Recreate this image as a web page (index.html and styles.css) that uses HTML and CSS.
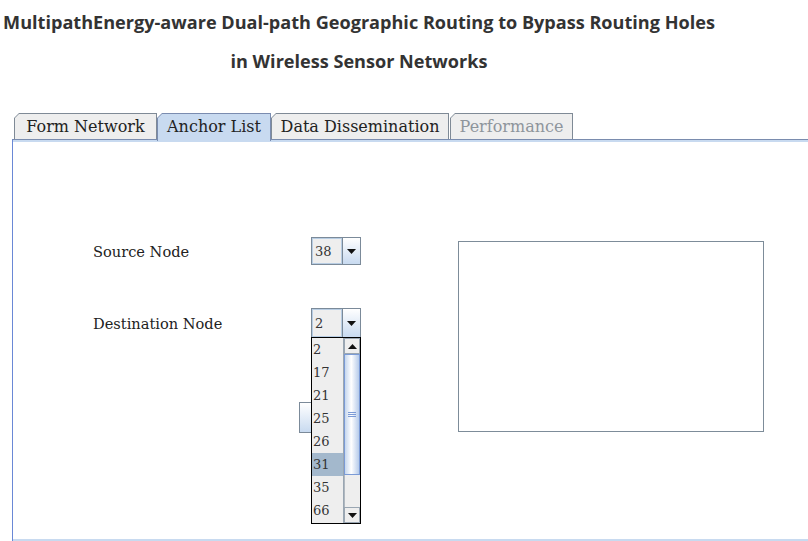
FILE: index.html
```html
<!DOCTYPE html>
<html lang="en">
<head>
<meta charset="utf-8">
<title>Anchor List</title>
<link rel="stylesheet" href="styles.css">
</head>
<body>
<div class="app">
  <header class="title">
    <h1>MultipathEnergy-aware Dual-path Geographic Routing to Bypass Routing Holes</h1>
    <h2>in Wireless Sensor Networks</h2>
  </header>
  <nav class="tabs">
    <div class="tab tab-form"><span>Form Network</span></div>
    <div class="tab tab-anchor selected"><span>Anchor List</span></div>
    <div class="tab tab-data"><span>Data Dissemination</span></div>
    <div class="tab tab-perf disabled"><span>Performance</span></div>
  </nav>
  <section class="panel">
    <div class="form">
      <div class="label">Source Node</div>
      <div class="combo">
        <div class="combo-value">38</div>
        <div class="combo-arrow"><svg width="9" height="5" viewBox="0 0 9 5"><path d="M0 0H9L4.5 5Z" fill="#111"/></svg></div>
      </div>
      <div class="label">Destination Node</div>
      <div class="combo open">
        <div class="combo-value">2</div>
        <div class="combo-arrow"><svg width="9" height="5" viewBox="0 0 9 5"><path d="M0 0H9L4.5 5Z" fill="#111"/></svg></div>
        <div class="popup">
          <ul class="list">
            <li>2</li>
            <li>17</li>
            <li>21</li>
            <li>25</li>
            <li>26</li>
            <li class="sel">31</li>
            <li>35</li>
            <li>66</li>
          </ul>
          <div class="scrollbar">
            <div class="sb-btn"><svg width="9" height="5" viewBox="0 0 9 5"><path d="M0 5H9L4.5 0Z" fill="#111"/></svg></div>
            <div class="sb-thumb"><span class="grip"></span></div>
            <div class="sb-track"></div>
            <div class="sb-btn"><svg width="9" height="5" viewBox="0 0 9 5"><path d="M0 0H9L4.5 5Z" fill="#111"/></svg></div>
          </div>
        </div>
      </div>
      <div class="hidden-btn"></div>
    </div>
    <div class="output"></div>
  </section>
</div>
</body>
</html>
```
FILE: styles.css
```css
html, body {
  margin: 0;
  padding: 0;
  background: #ffffff;
  overflow: hidden;
}
.app {
  width: 808px;
  height: 541px;
  display: flex;
  flex-direction: column;
}
.title {
  width: 718px;
  text-align: center;
  color: #333333;
  font-family: "Open Sans", "DejaVu Sans", sans-serif;
  font-weight: 700;
  font-size: 18.1px;
}
.title h1, .title h2 {
  margin: 0;
  font-size: inherit;
  font-weight: 700;
  white-space: nowrap;
  line-height: 39px;
}
.title h1 {
  margin-top: 3px;
}
.tabs {
  display: flex;
  margin-top: 32px;
  padding-left: 14px;
  height: 26px;
  font-family: "DejaVu Serif", serif;
  font-size: 16px;
}
.tab {
  box-sizing: border-box;
  background: #7f8a96;
  padding: 1px 1px 0 1px;
  clip-path: polygon(0 5px, 5px 0, 100% 0, 100% 100%, 0 100%);
  display: flex;
}
.tab span {
  flex: 1;
  background: #eeeeee;
  color: #222222;
  clip-path: polygon(0 4px, 4px 0, 100% 0, 100% 100%, 0 100%);
  display: flex;
  align-items: center;
  justify-content: center;
  line-height: 1;
  padding-top: 1px;
}
.tab-form { width: 143px; }
.tab-anchor { width: 114px; }
.tab-data { width: 178px; }
.tab-perf { width: 123px; margin-left: 1px; }
.tab.selected {
  background: #7a8cb0;
  height: 28px;
  position: relative;
  z-index: 2;
}
.tab.selected span {
  background: #c8daf0;
  padding-bottom: 2px;
}
.tab.disabled span {
  color: #8e959c;
}
.panel {
  flex: 1;
  margin-left: 12px;
  border-top: 1px solid #7a8cae;
  border-left: 1px solid #6a88d6;
  box-shadow: inset 0 2px 0 #c8daf0, inset 0 -2px 0 #c8daf0;
  display: flex;
  align-items: flex-start;
  padding-top: 97px;
  padding-left: 80px;
  box-sizing: border-box;
}
.form {
  display: grid;
  grid-template-columns: 218px 50px;
  grid-auto-rows: auto;
  row-gap: 43px;
  align-items: center;
}
.label {
  font-family: "DejaVu Serif", serif;
  font-size: 14.6px;
  color: #222222;
}
.combo {
  position: relative;
  height: 28px;
  box-sizing: border-box;
  border: 1px solid #7b8a99;
  display: flex;
}
.combo.open {
  height: 30px;
}
.combo-value {
  width: 30px;
  box-sizing: border-box;
  background: #eeeeee;
  border: 1px solid #b8cde3;
  font-family: "DejaVu Serif", serif;
  font-size: 13px;
  color: #333333;
  display: flex;
  align-items: center;
  padding-left: 2px;
}
.combo-arrow {
  flex: 1;
  border-left: 1px solid #7b8a99;
  background: linear-gradient(to bottom, #ffffff, #c8daf0);
  display: flex;
  align-items: center;
  justify-content: center;
}
.popup {
  position: absolute;
  left: -1px;
  top: 100%;
  width: 50px;
  height: 187px;
  box-sizing: border-box;
  border: 1px solid #000000;
  background: #eeeeee;
  display: flex;
  z-index: 5;
}
.list {
  list-style: none;
  margin: 0;
  padding: 0;
  flex: 1;
  font-family: "DejaVu Serif", serif;
  font-size: 13px;
  color: #333333;
}
.list li {
  height: 23px;
  line-height: 23px;
  padding-left: 1px;
}
.list li.sel {
  background: #a3b8cc;
}
.scrollbar {
  width: 16px;
  display: flex;
  flex-direction: column;
  border-left: 1px solid #9aa6b2;
}
.sb-btn {
  height: 16px;
  box-sizing: border-box;
  border: 1px solid #9aa6b2;
  background: #eeeeee;
  display: flex;
  align-items: center;
  justify-content: center;
}
.sb-thumb {
  height: 121px;
  box-sizing: border-box;
  border: 1px solid #7b9bd6;
  background: linear-gradient(to right, #c6d7ee, #ffffff 45%, #b6cbea);
  display: flex;
  align-items: center;
  justify-content: center;
}
.grip {
  width: 8px;
  height: 5px;
  background: repeating-linear-gradient(to bottom, #7b9bd6 0 1px, transparent 1px 2px);
}
.sb-track {
  flex: 1;
  background: #eeeeee;
  border-left: 1px solid #b0b8c0;
}
.hidden-btn {
  grid-column: 2;
  width: 40px;
  height: 31px;
  margin-left: -12px;
  margin-top: 21px;
  box-sizing: border-box;
  border: 1px solid #7b8a99;
  background: linear-gradient(to bottom, #ffffff, #c8daf0);
}
.output {
  width: 306px;
  height: 191px;
  margin-left: 97px;
  margin-top: 4px;
  box-sizing: border-box;
  border: 1px solid #7d8c99;
  background: #ffffff;
}
```
